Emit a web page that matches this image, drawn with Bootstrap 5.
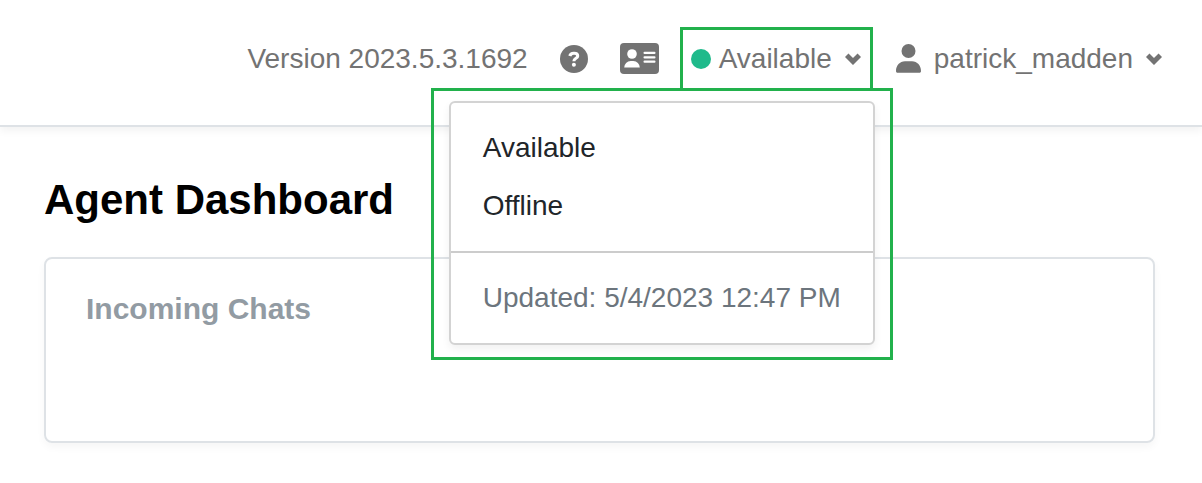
<!DOCTYPE html>
<html lang="en">
<head>
<meta charset="utf-8">
<meta name="viewport" content="width=device-width, initial-scale=1">
<title>Agent Dashboard</title>
<link href="https://cdn.jsdelivr.net/npm/bootstrap@5.3.0/dist/css/bootstrap.min.css" rel="stylesheet">
<style>
  body { font-family: "Liberation Sans", Arial, sans-serif; font-size: 28px; line-height: 42px; color: #212529; background: #fff; }
  .topbar { height: 127px; padding: 27px 40px 0 16px; border-bottom: 2px solid #dee2e6; box-shadow: 0 4px 8px rgba(0,0,0,.05); color: #737373; position: relative; z-index: 10; }
  .topbar > * { height: 63px; }
  .topbar svg { display: block; flex: none; fill: currentColor; }
  .topbar svg.chevron { fill: none; stroke: currentColor; stroke-width: 5; }
  .plain { border: 0; padding: 0; background: none; color: inherit; line-height: 42px; }
  .help-link { margin-left: 32px; color: inherit; }
  .card-link-icon { margin-left: 32px; color: inherit; }
  .topbar > .status { height: 61px; position: relative; margin-left: 21px; border: 3px solid #22b14c; border-bottom: 0; padding: 0 9px 0 8px; }
  .status .plain { gap: 8px; }
  .status .chevron { margin-left: 5px; }
  .status-dot { width: 20px; height: 20px; border-radius: 50%; background: #1fba8b; }
  .status-panel { position: absolute; top: 100%; right: -23px; border: 3px solid #22b14c; padding: 10px 15px 12px; }
  .status-panel .dropdown-menu { position: static; --bs-dropdown-font-size: 28px; --bs-dropdown-padding-y: 16px; --bs-dropdown-padding-x: 0; --bs-dropdown-spacer: 0; --bs-dropdown-border-width: 2px; --bs-dropdown-border-radius: 6px; --bs-dropdown-border-color: #d3d3d3; --bs-dropdown-item-padding-x: 32px; --bs-dropdown-item-padding-y: 8px; --bs-dropdown-color: #212529; background-clip: border-box; box-shadow: 0 4px 8px rgba(0,0,0,.06); }
  .status-panel .dropdown-divider { margin: 16px 0; border-top: 2px solid #ccc; opacity: 1; }
  .updated { padding: 8px 32px; color: #6c757d; white-space: nowrap; }
  .account { margin-left: 23px; }
  .account .user-name { margin: 0 13px; }
  .page-body { padding: 48px 47px 40px 44px; }
  .page-title { font-size: 42px; line-height: 50px; font-weight: 700; color: #000; margin: 0 0 32px; }
  .chats { border: 2px solid #dee2e6; border-radius: 8px; box-shadow: 0 4px 8px rgba(0,0,0,.04); padding: 32px 40px; min-height: 186px; }
  .chats h2 { font-size: 30px; line-height: 36px; font-weight: 700; color: #929ba3; margin: 0; }
</style>
</head>
<body>
<header class="topbar d-flex justify-content-end">
  <div class="d-flex align-items-center text-nowrap">Version 2023.5.3.1692</div>
  <a href="#" class="help-link d-flex align-items-center" aria-label="Help">
    <svg width="28" height="28" viewBox="0 0 28 28"><circle cx="14" cy="14" r="14"/><path d="M9.800 11c.8-3 2.600-2.700 4.400-2.700 2 0 3.500 1 3.500 2.700 0 2.400-3.800 2.300-3.800 5.200" fill="none" stroke="#fff" stroke-width="3.100"/><circle cx="13.900" cy="19.700" r="2" fill="#fff"/></svg>
  </a>
  <a href="#" class="card-link-icon d-flex align-items-center" aria-label="Contact card">
    <svg width="39" height="31" viewBox="0 0 39 31"><rect width="39" height="31" rx="4"/><g fill="#fff"><circle cx="12" cy="11" r="4.800"/><path d="M4.200 24.500a6.500 6.500 0 0 1 6.500-6.500h2.600a6.500 6.500 0 0 1 6.500 6.500z"/><rect x="23.500" y="8.800" width="12" height="2.200" rx="1"/><rect x="23.500" y="13.200" width="12" height="2.200" rx="1"/><rect x="23.500" y="17.600" width="12" height="2.200" rx="1"/></g></svg>
  </a>
  <div class="status d-flex">
    <button type="button" class="plain d-flex align-items-center" aria-expanded="true" aria-controls="status-menu">
      <span class="status-dot"></span>
      <span>Available</span>
      <svg class="chevron" width="16" height="12" viewBox="0 0 16 12"><path d="M1.700 2.200 8 8.500l6.300-6.300"/></svg>
    </button>
    <div class="status-panel">
      <ul class="dropdown-menu show" id="status-menu">
        <li><button type="button" class="dropdown-item">Available</button></li>
        <li><button type="button" class="dropdown-item">Offline</button></li>
        <li><hr class="dropdown-divider"></li>
        <li class="updated">Updated: 5/4/2023 12:47 PM</li>
      </ul>
    </div>
  </div>
  <button type="button" class="plain account d-flex align-items-center">
    <svg width="25" height="29" viewBox="0 0 25 29"><circle cx="12.500" cy="7" r="7"/><path d="M0 27.200C0 21.500 3.800 17.300 9 17.300h7c5.200 0 9 4.200 9 9.900 0 .9-.7 1.500-1.600 1.500H1.600C.7 28.700 0 28.100 0 27.200z"/></svg>
    <span class="user-name">patrick_madden</span>
    <svg class="chevron" width="16" height="12" viewBox="0 0 16 12"><path d="M1.700 2.200 8 8.500l6.300-6.300"/></svg>
  </button>
</header>
<main class="page-body">
  <h1 class="page-title">Agent Dashboard</h1>
  <section class="chats">
    <h2>Incoming Chats</h2>
  </section>
</main>
<script src="https://cdn.jsdelivr.net/npm/bootstrap@5.3.0/dist/js/bootstrap.bundle.min.js"></script>
</body>
</html>
